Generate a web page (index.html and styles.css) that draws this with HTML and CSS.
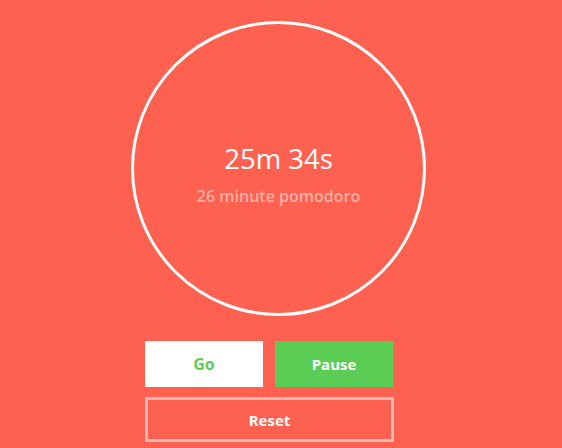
FILE: index.html
```html
<!DOCTYPE html>
<html>
<head>
<meta charset="utf-8">
<link rel="stylesheet" href="styles.css">
</head>
<body>
<main class="app">
  <div class="clock">
    <div class="time">25m 34s</div>
    <div class="label">26 minute pomodoro</div>
  </div>
  <div class="controls">
    <div class="row">
      <button class="btn btn-go">Go</button>
      <button class="btn btn-pause">Pause</button>
    </div>
    <button class="btn btn-reset">Reset</button>
  </div>
</main>
</body>
</html>
```

FILE: styles.css
```css
html, body {
  margin: 0;
  padding: 0;
  background: #ff6150;
  height: 100%;
}
body {
  font-family: "Open Sans", "DejaVu Sans", sans-serif;
  overflow: hidden;
}
.app {
  display: flex;
  flex-direction: column;
  padding-top: 21px;
}
.clock {
  box-sizing: border-box;
  width: 295px;
  height: 295px;
  margin-left: 131px;
  border: 3px solid #ffffff;
  border-radius: 50%;
  display: flex;
  flex-direction: column;
  align-items: center;
  justify-content: center;
  padding-top: 10px;
}
.time {
  color: #ffffff;
  font-size: 27.5px;
  font-weight: 500;
  line-height: 34px;
}
.label {
  color: #fcb0a6;
  font-size: 16px;
  font-weight: 600;
  line-height: 20px;
  margin-top: 10px;
}
.controls {
  margin-left: 145px;
  margin-top: 25px;
  width: 248px;
  display: flex;
  flex-direction: column;
  gap: 10px;
}
.row {
  display: flex;
  gap: 12px;
}
.btn {
  font-family: "Open Sans", "DejaVu Sans", sans-serif;
  font-size: 15px;
  font-weight: 700;
  border: none;
  padding: 0;
  cursor: pointer;
}
.btn-go,
.btn-pause {
  width: 118px;
  height: 46px;
}
.btn-go {
  background: #ffffff;
  color: #5acd55;
  font-size: 16px;
}
.btn-pause {
  background: #5acd55;
  color: #ffffff;
}
.btn-reset {
  box-sizing: border-box;
  width: 249px;
  height: 45px;
  background: transparent;
  border: 3px solid #f8b7ae;
  color: #ffffff;
}
```
